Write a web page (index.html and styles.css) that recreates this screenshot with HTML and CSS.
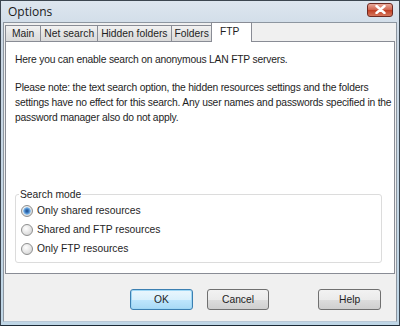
FILE: index.html
```html
<!DOCTYPE html>
<html lang="en">
<head>
    <meta charset="UTF-8">
    <title>Options</title>
    <link rel="stylesheet" href="styles.css">
</head>
<body>
    <div class="window">
        <div class="titlebar">
            <span class="title">Options</span>
            <button class="close" aria-label="Close">
                <svg width="11" height="9" viewBox="0 0 11 9">
                    <path d="M1.5 1 L9.5 8 M9.5 1 L1.5 8" stroke="#fff" stroke-width="2.4" stroke-linecap="round"/>
                </svg>
            </button>
        </div>
        <div class="client">
            <div class="tabs">
                <div class="tab main">Main</div>
                <div class="tab">Net search</div>
                <div class="tab">Hidden folders</div>
                <div class="tab">Folders</div>
                <div class="tab active">FTP</div>
            </div>
            <div class="panel">
                <p>Here you can enable search on anonymous LAN FTP servers.</p>
                <p class="note">Please note: the text search option, the hidden resources settings and the folders<br>
                    settings have no effect for this search. Any user names and passwords specified in the<br>
                    password manager also do not apply.</p>
                <fieldset class="group">
                    <legend>Search mode</legend>
                    <label class="radio"><input type="radio" name="mode" checked> Only shared resources</label>
                    <label class="radio"><input type="radio" name="mode"> Shared and FTP resources</label>
                    <label class="radio"><input type="radio" name="mode"> Only FTP resources</label>
                </fieldset>
            </div>
            <div class="buttons">
                <button class="btn default">OK</button>
                <button class="btn">Cancel</button>
                <button class="btn help">Help</button>
            </div>
        </div>
    </div>
</body>
</html>
```

FILE: styles.css
```css
body {
    margin: 0;
    font-family: "Liberation Sans", Arial, sans-serif;
    font-size: 10.3px;
    color: #1e1e1e;
}

.window {
    width: 400px;
    height: 326px;
    box-sizing: border-box;
    border: 1px solid #3c4650;
    border-bottom-color: #1c2a36;
    background: linear-gradient(#dde6ef, #cad7e4 40px, #bfd6e6);
    padding: 0 2px 3px 2px;
    display: flex;
    flex-direction: column;
}

.titlebar {
    height: 21px;
    display: flex;
    align-items: center;
    justify-content: space-between;
    padding: 0 4px 0 5px;
}

.title {
    font-family: "Open Sans", "Liberation Sans", sans-serif;
    font-size: 12px;
    color: #1a1a1a;
}

.close {
    width: 26px;
    height: 14px;
    margin-top: -4px;
    border: 1px solid #6e2a22;
    border-radius: 3px;
    background: linear-gradient(#e9a99a, #d0614b 50%, #c03d22 51%, #d6765c);
    display: flex;
    align-items: center;
    justify-content: center;
    padding: 0;
}

.client {
    flex: 1;
    background: #f0f0f0;
    border: 1px solid #8d96a0;
    border-bottom-color: #b9c8d6;
    display: flex;
    flex-direction: column;
    padding: 0 1px;
}

.tabs {
    display: flex;
    height: 18px;
    align-items: flex-end;
}

.tab {
    height: 16px;
    line-height: 16px;
    padding: 0 3px;
    border: 1px solid #898c95;
    border-bottom: none;
    border-right: none;
    background: linear-gradient(#f2f2f2, #e3e3e3 50%, #d9d9d9);
    margin-bottom: -1px;
}

.tab.main {
    padding: 0 6px;
}

.tab.active {
    height: 19px;
    line-height: 17px;
    padding: 0 12px 0 8px;
    background: #fff;
    border-right: 1px solid #898c95;
    position: relative;
    margin-left: -1px;
    z-index: 1;
}

.panel {
    background: #fff;
    border: 1px solid #898c95;
    height: 233px;
    box-sizing: border-box;
    padding: 10px 0 0 9px;
    display: flex;
    flex-direction: column;
    overflow: hidden;
}

.panel p {
    margin: 0 0 13px 0;
    line-height: 15px;
    letter-spacing: -0.2px;
}

.panel p.note {
    white-space: nowrap;
}

.group {
    margin: auto 12px 10px 0;
    border: 1px solid #dcdcdc;
    border-radius: 3px;
    padding: 1px 6px 4px 4px;
    display: flex;
    flex-direction: column;
}

.group legend {
    padding: 0 1px;
    margin-left: -1px;
}

.radio {
    display: flex;
    align-items: center;
    height: 19px;
}

.radio input {
    appearance: none;
    margin: 0 4px 0 1px;
    width: 12px;
    height: 12px;
    border-radius: 50%;
    border: 1px solid #8e8f8f;
    background: radial-gradient(circle at 40% 35%, #ffffff, #dcdcdc 70%, #c8c8c8);
    box-sizing: border-box;
}

.radio input:checked {
    background:
        radial-gradient(circle at 50% 50%, #1b4a86 0, #3f7ec4 2px, #8cc0ec 3.5px, transparent 4px),
        radial-gradient(circle at 40% 35%, #ffffff, #dcdcdc 70%, #c8c8c8);
}

.buttons {
    flex: 1;
    display: flex;
    align-items: center;
    padding-left: 125px;
    padding-top: 3px;
}

.btn {
    width: 64px;
    height: 21px;
    font-family: "Liberation Sans", Arial, sans-serif;
    font-size: 10.3px;
    color: #1e1e1e;
    border: 1px solid #707070;
    border-radius: 3px;
    background: linear-gradient(#f2f2f2, #ebebeb 50%, #dddddd 51%, #cfcfcf);
    margin-right: 14px;
}

.btn.default {
    border-color: #3c7fb1;
    box-shadow: inset 0 0 0 1px #9fd7f5;
    background: linear-gradient(#eaf6fd, #d9f0fc 50%, #bee6fd 51%, #a7d9f5);
}

.btn.help {
    margin-left: 35px;
}
```
